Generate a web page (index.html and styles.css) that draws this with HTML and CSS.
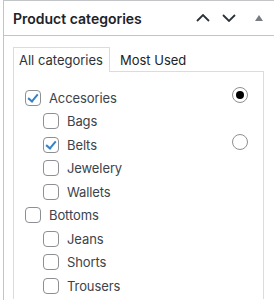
FILE: index.html
```html
<!DOCTYPE html>
<html lang="en">
<head>
  <meta charset="UTF-8">
  <meta name="viewport" content="width=device-width, initial-scale=1">
  <title>Product categories</title>
  <link rel="stylesheet" href="styles.css">
</head>
<body>
  <div class="postbox">
    <!-- Box header -->
    <div class="postbox-header">
      <h2>Product categories</h2>
      <div class="handle-actions">
        <svg class="chev" width="14" height="8" viewBox="0 0 14 8"><path d="M1 7 L7 1 L13 7" /></svg>
        <svg class="chev" width="14" height="8" viewBox="0 0 14 8"><path d="M1 1 L7 7 L13 1" /></svg>
        <svg class="toggle" width="8" height="6" viewBox="0 0 8 6"><path d="M4 0 L8 6 L0 6 Z" /></svg>
      </div>
    </div>

    <div class="inside">
      <ul class="category-tabs">
        <li class="tab active">All categories</li>
        <li class="tab">Most Used</li>
      </ul>

      <div class="tabs-panel">
        <ul class="cat-list">
          <li class="cat-row">
            <span class="checkbox checked"></span>
            <span class="label">Accesories</span>
            <span class="radio selected"></span>
          </li>
          <li class="cat-row child">
            <span class="checkbox"></span>
            <span class="label">Bags</span>
          </li>
          <li class="cat-row child">
            <span class="checkbox checked"></span>
            <span class="label">Belts</span>
            <span class="radio"></span>
          </li>
          <li class="cat-row child">
            <span class="checkbox"></span>
            <span class="label">Jewelery</span>
          </li>
          <li class="cat-row child">
            <span class="checkbox"></span>
            <span class="label">Wallets</span>
          </li>
          <li class="cat-row">
            <span class="checkbox"></span>
            <span class="label">Bottoms</span>
          </li>
          <li class="cat-row child">
            <span class="checkbox"></span>
            <span class="label">Jeans</span>
          </li>
          <li class="cat-row child">
            <span class="checkbox"></span>
            <span class="label">Shorts</span>
          </li>
          <li class="cat-row child">
            <span class="checkbox"></span>
            <span class="label">Trousers</span>
          </li>
        </ul>
      </div>
    </div>
  </div>
</body>
</html>
```

FILE: styles.css
```css
/* General */
* {
  margin: 0;
  padding: 0;
  box-sizing: border-box;
  font-family: 'Inter', sans-serif;
}

body {
  background-color: #ffffff;
  color: #3c434a;
  height: 300px;
  overflow: hidden;
}

ul {
  list-style: none;
}

/* Meta box */
.postbox {
  margin-left: 3px;
  width: 271px;
  height: 300px;
  background: #ffffff;
  border: 1px solid #c3c4c7;
  border-right: none;
  border-bottom: none;
}

.postbox-header {
  height: 35px;
  display: flex;
  align-items: center;
  padding-left: 9px;
  border-bottom: 1px solid #c3c4c7;
}

.postbox-header h2 {
  font-size: 14px;
  font-weight: 600;
  color: #1d2327;
}

.handle-actions {
  display: flex;
  align-items: center;
  margin-left: 54px;
}

.chev {
  fill: none;
  stroke: #2c3338;
  stroke-width: 1.8;
  margin-right: 12px;
}

.toggle {
  fill: #787c82;
  margin-left: 7px;
}

/* Tabs */
.inside {
  padding: 11px 0 0 9px;
}

.category-tabs {
  display: flex;
  font-size: 13px;
  color: #1d2327;
}

.tab {
  padding: 5px 6px 4px 5px;
  line-height: 15px;
  border: 1px solid transparent;
  border-bottom: none;
  margin-bottom: -1px;
  position: relative;
}

.tab.active {
  border-color: #dcdcde;
  background: #ffffff;
  color: #2c3338;
}

.tab + .tab {
  padding-left: 9px;
}

.tabs-panel {
  width: 251px;
  height: 228px;
  border: 1px solid #dcdcde;
  border-bottom: none;
  padding: 14px 15px 0 11px;
}

/* Category list */
.cat-row {
  display: flex;
  align-items: center;
  height: 23.5px;
  font-size: 13px;
}

.cat-row.child {
  padding-left: 18px;
}

.checkbox {
  width: 16px;
  height: 16px;
  border: 1px solid #8c8f94;
  border-radius: 4px;
  background: #ffffff;
  position: relative;
  flex-shrink: 0;
}

.checkbox.checked::after {
  content: "";
  position: absolute;
  left: 4px;
  top: 1px;
  width: 4px;
  height: 8px;
  border: solid #3582c4;
  border-width: 0 2px 2px 0;
  transform: rotate(40deg);
}

.label {
  margin-left: 8px;
  letter-spacing: -0.1px;
}

.radio {
  width: 16px;
  height: 16px;
  border: 1px solid #8c8f94;
  border-radius: 50%;
  margin-left: auto;
  margin-top: -6px;
  position: relative;
  flex-shrink: 0;
}

.radio.selected::after {
  content: "";
  position: absolute;
  left: 3px;
  top: 3px;
  width: 8px;
  height: 8px;
  border-radius: 50%;
  background: #000000;
}
```
